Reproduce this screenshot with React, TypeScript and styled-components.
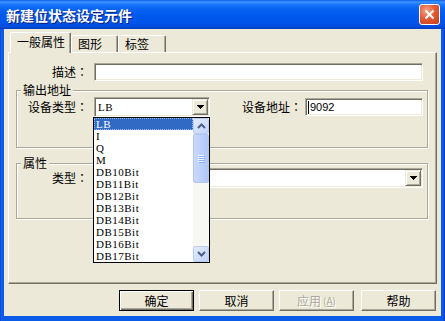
import React from "react";
import styled, { createGlobalStyle } from "styled-components";

const FACE = "#ECE9D8";
const HI = "#FFFFFF";
const SHADOW = "#ACA899";
const DARK = "#716F64";
const SEL = "#316AC5";
const CJK = `"Noto Sans CJK SC", "Liberation Sans", sans-serif`;
const CJK_TC = `"Noto Sans CJK TC", "Noto Sans CJK SC", sans-serif`;
const SERIF = `"Liberation Serif", "Noto Sans CJK SC", serif`;

const Global = createGlobalStyle`
  *, *::before, *::after { box-sizing: border-box; }
  html, body { margin: 0; padding: 0; background: #fff; }
  body { font-family: ${CJK}; font-size: 12px; color: #000; }
`;

const Window = styled.div`
  width: 445px;
  height: 321px;
  display: flex;
  flex-direction: column;
  overflow: hidden;
  background: linear-gradient(
    to right,
    #0831c8 0,
    #1768ee 1px,
    #0a5be6 2px,
    #0a5be6 calc(100% - 2px),
    #0737c9 100%
  );
`;

const TitleBar = styled.div`
  height: 29px;
  flex: none;
  display: flex;
  align-items: center;
  justify-content: space-between;
  padding: 0 5px 0 6px;
  background: linear-gradient(
    to bottom,
    #0a5fe8 0%,
    #3d95ff 7%,
    #1d78fb 14%,
    #0864f3 30%,
    #0058ee 55%,
    #0055ea 80%,
    #004ad8 93%,
    #003fc0 100%
  );
`;

const Title = styled.span`
  color: #fff;
  font-family: ${CJK};
  font-weight: bold;
  font-size: 14px;
  line-height: 16px;
  text-shadow: 1px 1px 0 #0a1e7a;
`;

const CloseBtn = styled.div`
  width: 21px;
  height: 21px;
  border: 1px solid #fff;
  border-radius: 3px;
  background: radial-gradient(circle at 35% 30%, #f3a58b 0%, #e35c35 45%, #c23a1a 100%);
  display: flex;
  align-items: center;
  justify-content: center;
`;

const Body = styled.div`
  flex: 1;
  margin: 0 4px 5px;
  background: ${FACE};
  display: flex;
  flex-direction: column;
  padding: 3px 4px 0;
`;

const TabStrip = styled.div`
  height: 20px;
  flex: none;
  display: flex;
  align-items: flex-end;
  padding-left: 2px;
  position: relative;
  z-index: 1;
`;

const Tab = styled.div<{ $active?: boolean; $w: number }>`
  width: ${(p) => p.$w}px;
  height: ${(p) => (p.$active ? 21 : 17)}px;
  margin-bottom: ${(p) => (p.$active ? -1 : 0)}px;
  padding: 0 0 ${(p) => (p.$active ? 2 : 0)}px 6px;
  display: flex;
  align-items: center;
  background: ${FACE};
  border-top: 1px solid ${HI};
  border-left: 1px solid ${HI};
  border-right: 1px solid ${DARK};
  border-radius: 2px 2px 0 0;
  box-shadow: inset -1px 0 0 ${SHADOW};
  font-size: 12px;
  line-height: 14px;
  white-space: nowrap;
`;

const Panel = styled.div`
  height: 232px;
  flex: none;
  border: 1px solid;
  border-color: ${HI} ${DARK} ${DARK} ${HI};
  box-shadow: inset -1px -1px 0 ${SHADOW};
  padding-top: 10px;
  display: flex;
  flex-direction: column;
`;

const Row = styled.div`
  display: flex;
  align-items: center;
`;

const Label = styled.span<{ $w: number; $gap?: number }>`
  width: ${(p) => p.$w}px;
  margin-right: ${(p) => p.$gap ?? 6}px;
  flex: none;
  text-align: right;
  white-space: nowrap;
  font-size: 12px;
  line-height: 14px;
`;

const Colon = styled.span`
  font-family: ${CJK_TC};
`;

const sunken = `
  border: 1px solid;
  border-color: ${SHADOW} ${HI} ${HI} ${SHADOW};
  box-shadow: inset 1px 1px 0 ${DARK}, inset -1px -1px 0 ${FACE};
`;

const TextInput = styled.div<{ $w: number; $h?: number }>`
  width: ${(p) => p.$w}px;
  height: ${(p) => p.$h ?? 18}px;
  flex: none;
  background: #fff;
  ${sunken}
  display: flex;
  align-items: center;
  padding-left: 2px;
  font-family: "Liberation Sans", sans-serif;
  font-size: 11px;
`;

const Caret = styled.span`
  width: 1px;
  height: 13px;
  background: #000;
  margin-right: 1px;
`;

const Combo = styled.div<{ $w: number }>`
  position: relative;
  width: ${(p) => p.$w}px;
  height: 20px;
  flex: none;
  background: #fff;
  ${sunken}
  padding: 1px;
  display: flex;
  align-items: center;
  justify-content: space-between;
`;

const ComboValue = styled.span`
  font-family: ${SERIF};
  font-size: 11px;
  letter-spacing: 0.5px;
  line-height: 12px;
  padding-left: 2px;
`;

const DropButton = styled.div`
  width: 16px;
  height: 16px;
  flex: none;
  background: ${FACE};
  border: 1px solid;
  border-color: ${FACE} ${DARK} ${DARK} ${FACE};
  box-shadow: inset 1px 1px 0 ${HI}, inset -1px -1px 0 ${SHADOW};
  display: flex;
  align-items: center;
  justify-content: center;
`;

const Group = styled.div<{ $mt: number; $pt: number; $pb: number }>`
  position: relative;
  margin: ${(p) => p.$mt}px 8px 0 7px;
  padding: ${(p) => p.$pt}px 0 ${(p) => p.$pb}px 0;
  border: 1px solid ${SHADOW};
  box-shadow: 1px 1px 0 ${HI}, inset 1px 1px 0 ${HI};
`;

const GroupTitle = styled.span`
  position: absolute;
  top: -8px;
  left: 4px;
  padding: 0 2px;
  background: ${FACE};
  font-size: 12px;
  line-height: 14px;
  white-space: nowrap;
`;

const DropList = styled.div`
  position: absolute;
  top: calc(100% + 1px);
  left: -2px;
  width: 117px;
  height: 146px;
  z-index: 10;
  background: #fff;
  border: 1px solid #000;
  display: flex;
`;

const Items = styled.div`
  flex: 1;
  display: flex;
  flex-direction: column;
`;

const Item = styled.div<{ $sel?: boolean }>`
  height: 12px;
  line-height: 12px;
  padding-left: 2px;
  font-family: ${SERIF};
  font-size: 11px;
  letter-spacing: 0.5px;
  white-space: nowrap;
  overflow: hidden;
  background: ${(p) => (p.$sel ? SEL : "transparent")};
  color: ${(p) => (p.$sel ? "#fff" : "#000")};
  outline: ${(p) => (p.$sel ? "1px dotted #9fbdf0" : "none")};
  outline-offset: -1px;
`;

const ScrollBar = styled.div`
  width: 16px;
  flex: none;
  display: flex;
  flex-direction: column;
  background: #f7f7f3;
`;

const ScrollBtn = styled.div`
  width: 16px;
  height: 16px;
  flex: none;
  border: 1px solid #bccdf5;
  border-radius: 2px;
  background: linear-gradient(to bottom right, #e3ecfe, #c1d3fb);
  display: flex;
  align-items: center;
  justify-content: center;
`;

const Thumb = styled.div`
  width: 16px;
  height: 49px;
  flex: none;
  border: 1px solid #b3c6f3;
  border-radius: 2px;
  background: linear-gradient(to right, #c9d9fd, #bacffb 60%, #afc6f8);
  display: flex;
  align-items: center;
  justify-content: center;
`;

const Track = styled.div`
  flex: 1;
`;

const ButtonRow = styled.div`
  margin-top: 6px;
  padding-right: 1px;
  display: flex;
  justify-content: flex-end;
`;

const Button = styled.div<{ $default?: boolean; $disabled?: boolean; $ml?: number }>`
  width: 75px;
  height: 21px;
  margin-left: ${(p) => p.$ml ?? 5}px;
  display: flex;
  align-items: center;
  justify-content: center;
  background: ${FACE};
  font-size: 12px;
  line-height: 14px;
  white-space: nowrap;
  color: ${(p) => (p.$disabled ? SHADOW : "#000")};
  text-shadow: ${(p) => (p.$disabled ? `1px 1px 0 ${HI}` : "none")};
  border: 1px solid;
  border-color: ${(p) => (p.$default ? "#000" : `${HI} ${DARK} ${DARK} ${HI}`)};
  box-shadow: ${(p) =>
    p.$default
      ? `inset 1px 1px 0 ${HI}, inset -1px -1px 0 ${DARK}, inset -2px -2px 0 ${SHADOW}`
      : `inset -1px -1px 0 ${SHADOW}`};
`;

const Accel = styled.span`
  font-size: 10px;
  margin-left: 2px;
`;

const Under = styled.span`
  text-decoration: underline;
`;

const Arrow = () => (
  <svg width="7" height="4" viewBox="0 0 7 4">
    <path d="M0 0h7v1H6v1H5v1H4v1H3V3H2V2H1V1H0z" fill="#000" />
  </svg>
);

const Chevron = ({ up }: { up?: boolean }) => (
  <svg width="9" height="6" viewBox="0 0 9 6">
    <polyline
      points={up ? "1,5 4.5,1.5 8,5" : "1,1 4.5,4.5 8,1"}
      fill="none"
      stroke="#4d6185"
      strokeWidth="2"
    />
  </svg>
);

const Grip = () => (
  <svg width="7" height="8" viewBox="0 0 7 8">
    {[0, 2, 4, 6].map((y) => (
      <g key={y}>
        <rect x="0" y={y} width="6" height="1" fill="#eef4fe" />
        <rect x="1" y={y + 1} width="6" height="1" fill="#8cb0f8" />
      </g>
    ))}
  </svg>
);

const items = [
  "LB",
  "I",
  "Q",
  "M",
  "DB10Bit",
  "DB11Bit",
  "DB12Bit",
  "DB13Bit",
  "DB14Bit",
  "DB15Bit",
  "DB16Bit",
  "DB17Bit",
];

export default function App() {
  return (
    <>
      <Global />
      <Window>
        <TitleBar>
          <Title>新建位状态设定元件</Title>
          <CloseBtn>
            <svg width="11" height="11" viewBox="0 0 11 11">
              <path d="M1.5 1.5L9.5 9.5M9.5 1.5L1.5 9.5" stroke="#fff" strokeWidth="2" />
            </svg>
          </CloseBtn>
        </TitleBar>
        <Body>
          <TabStrip>
            <Tab $active $w={61}>一般属性</Tab>
            <Tab $w={47}>图形</Tab>
            <Tab $w={48}>标签</Tab>
          </TabStrip>
          <Panel>
            <Row>
              <Label $w={79}>
                描述<Colon>：</Colon>
              </Label>
              <TextInput $w={329} />
            </Row>
            <Group $mt={9} $pt={6} $pb={30}>
              <GroupTitle>输出地址</GroupTitle>
              <Row>
                <Label $w={71}>
                  设备类型<Colon>：</Colon>
                </Label>
                <Combo $w={116}>
                  <ComboValue>LB</ComboValue>
                  <DropButton>
                    <Arrow />
                  </DropButton>
                  <DropList>
                    <Items>
                      {items.map((it, i) => (
                        <Item key={it} $sel={i === 0}>
                          {it}
                        </Item>
                      ))}
                    </Items>
                    <ScrollBar>
                      <ScrollBtn>
                        <Chevron up />
                      </ScrollBtn>
                      <Thumb>
                        <Grip />
                      </Thumb>
                      <Track />
                      <ScrollBtn>
                        <Chevron />
                      </ScrollBtn>
                    </ScrollBar>
                  </DropList>
                </Combo>
                <Label $w={92} $gap={3}>
                  设备地址<Colon>：</Colon>
                </Label>
                <TextInput $w={118}>
                  <Caret />
                  9092
                </TextInput>
              </Row>
            </Group>
            <Group $mt={15} $pt={4} $pb={30}>
              <GroupTitle>属性</GroupTitle>
              <Row>
                <Label $w={71}>
                  类型<Colon>：</Colon>
                </Label>
                <Combo $w={329}>
                  <ComboValue />
                  <DropButton>
                    <Arrow />
                  </DropButton>
                </Combo>
              </Row>
            </Group>
          </Panel>
          <ButtonRow>
            <Button $default>确定</Button>
            <Button>取消</Button>
            <Button $disabled>
              应用<Accel>
                (<Under>A</Under>)
              </Accel>
            </Button>
            <Button $ml={7}>帮助</Button>
          </ButtonRow>
        </Body>
      </Window>
    </>
  );
}
